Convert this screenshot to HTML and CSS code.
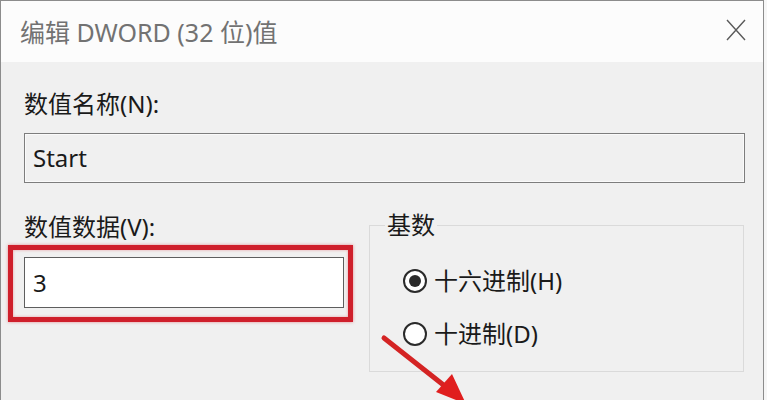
FILE: index.html
```html
<!DOCTYPE html>
<html lang="zh-CN">
<head>
<meta charset="utf-8">
<title>编辑 DWORD (32 位)值</title>
<link rel="stylesheet" href="styles.css">
</head>
<body>
<div class="dialog">
  <div class="titlebar">
    <span class="title">编辑 DWORD (32 位)值</span>
    <svg class="close" width="20" height="22" viewBox="0 0 20 22">
      <path d="M1 1 L19 21 M19 1 L1 21" stroke="#5a5a5a" stroke-width="1.4" fill="none"/>
    </svg>
  </div>
  <div class="content">
    <div class="label first">数值名称(N):</div>
    <div class="namebox">Start</div>
    <div class="row">
      <div class="leftcol">
        <div class="label">数值数据(V):</div>
        <div class="valuewrap">
          <div class="valuebox">3</div>
        </div>
      </div>
      <fieldset class="group">
        <legend class="legend">基数</legend>
        <div class="radio-row">
          <span class="radio checked"></span>
          <span class="radio-text">十六进制(H)</span>
        </div>
        <div class="radio-row second">
          <span class="radio"></span>
          <span class="radio-text">十进制(D)</span>
        </div>
      </fieldset>
    </div>
  </div>
</div>
<svg class="arrow" width="767" height="400" viewBox="0 0 767 400">
  <line x1="384" y1="338" x2="446" y2="387" stroke="#d42424" stroke-width="5" stroke-linecap="round"/>
  <polygon points="436,392 452,374 466,404" fill="#e01e1e"/>
</svg>
</body>
</html>
```
FILE: styles.css
```css
html, body {
  margin: 0;
  padding: 0;
}
body {
  width: 767px;
  height: 400px;
  overflow: hidden;
  position: relative;
  background: #f6f6f6;
  font-family: "Noto Sans", "Noto Sans CJK SC", sans-serif;
  font-size: 24px;
  color: #1a1a1a;
}
.dialog {
  box-sizing: border-box;
  width: 764px;
  height: 400px;
  border: 1px solid #8c8c8c;
  border-bottom: none;
  display: flex;
  flex-direction: column;
}
.titlebar {
  height: 61px;
  flex: none;
  background: #fcfcfc;
  display: flex;
  align-items: center;
  padding: 0 17px 0 19px;
}
.title {
  color: #727272;
  font-size: 25px;
  line-height: 30px;
}
.close {
  margin-left: auto;
  align-self: flex-start;
  margin-top: 18px;
}
.content {
  flex: 1;
  background: #f0f0f0;
  padding: 0 18px 0 23px;
}
.label {
  line-height: 30px;
  height: 30px;
}
.label.first {
  margin-top: 27px;
}
.namebox {
  box-sizing: border-box;
  margin-top: 14px;
  height: 50px;
  border: 1px solid #7d7d7d;
  box-shadow: inset 0 0 0 1px #fafafa;
  background: #f0f0f0;
  padding-left: 8px;
  line-height: 48px;
}
.row {
  display: flex;
  gap: 25px;
  margin-top: 29px;
}
.leftcol {
  width: 320px;
  flex: none;
}
.valuewrap {
  position: relative;
  margin-top: 15px;
}
.valuewrap::after {
  content: "";
  position: absolute;
  top: -12px;
  left: -16px;
  right: -9px;
  bottom: -14px;
  border: 5px solid #cf1f2b;
  box-shadow: 0 0 3px rgba(220, 40, 50, 0.5), inset 0 0 3px rgba(220, 40, 50, 0.4);
}
.valuebox {
  box-sizing: border-box;
  height: 51px;
  border: 1px solid #5e5e5e;
  background: #fff;
  padding-left: 8px;
  line-height: 49px;
}
.group {
  box-sizing: border-box;
  width: 375px;
  flex: none;
  margin: -2px 0 0 0;
  padding: 26px 0 22px 0;
  border: 1px solid #dadada;
  min-width: 0;
}
.legend {
  margin-left: 15px;
  padding: 0 2px;
  line-height: 30px;
}
.radio-row {
  display: flex;
  align-items: center;
  gap: 7px;
  height: 30px;
  line-height: 30px;
  padding-left: 33px;
}
.radio-row.second {
  margin-top: 23px;
}
.radio {
  box-sizing: border-box;
  width: 24px;
  height: 24px;
  border: 2px solid #2a2a2a;
  border-radius: 50%;
  background: #fff;
  display: flex;
  align-items: center;
  justify-content: center;
}
.radio.checked::after {
  content: "";
  width: 12px;
  height: 12px;
  border-radius: 50%;
  background: #2a2a2a;
}
.arrow {
  position: absolute;
  left: 0;
  top: 0;
  pointer-events: none;
}
```
